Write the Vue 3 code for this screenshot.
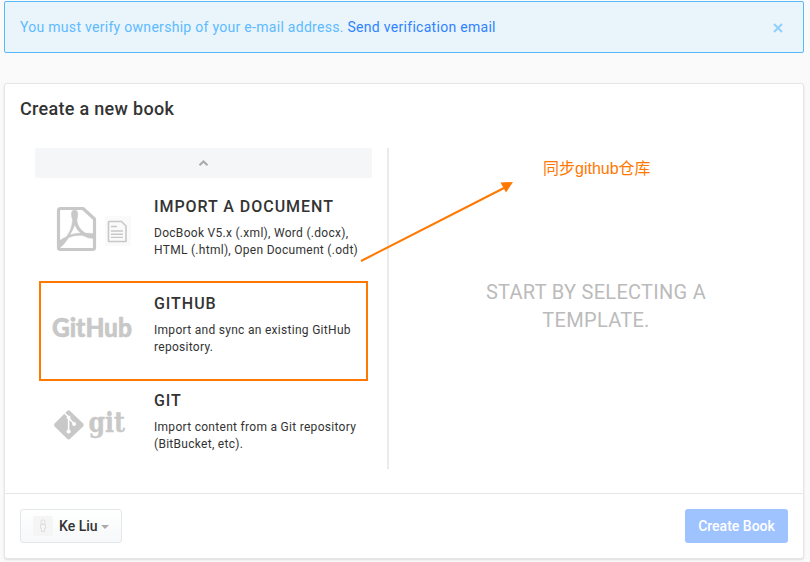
<script setup>
const templates = [
  { id: 'document', title: 'IMPORT A DOCUMENT', lines: ['DocBook V5.x (.xml), Word (.docx),', 'HTML (.html), Open Document (.odt)'] },
  { id: 'github', title: 'GITHUB', lines: ['Import and sync an existing GitHub', 'repository.'] },
  { id: 'git', title: 'GIT', lines: ['Import content from a Git repository', '(BitBucket, etc).'] },
]
</script>

<template>
  <main class="page">
    <div class="alert">
      <p>You must verify ownership of your e-mail address. <a>Send verification email</a></p>
      <svg class="close" width="10" height="10" viewBox="0 0 10 10"><path d="M1 1L9 9M9 1L1 9" /></svg>
    </div>

    <section class="card">
      <h1>Create a new book</h1>
      <div class="body">
        <div class="picker">
          <button class="scroll-up">
            <svg width="10" height="6" viewBox="0 0 10 6"><path d="M.5 5.2L4.5 1.4L8.5 5.2" /></svg>
          </button>
          <div v-for="item in templates" :key="item.id" class="item">
            <div class="logo">
              <svg v-if="item.id === 'document'" width="92" height="60" viewBox="0 0 92 60">
                <rect x="59" y="16" width="26" height="30" fill="#fafafa" />
                <g fill="none" stroke="#c8c8c8" stroke-linejoin="round">
                  <path d="M14.500 8.500H37L48.500 19V47.500Q48.500 49.500 46.500 49.500H14.500Q12.500 49.500 12.500 47.500V10.500Q12.500 8.500 14.500 8.500Z" stroke-width="3.200" />
                  <path d="M63 21.500H75.500L80 26V41.500H62.500V22.500Q62.500 21.500 63 21.500Z" stroke-width="1.600" />
                  <path d="M65 26.500H71M65 31H77M65 34.200H77M65 37.400H77" stroke-width="1.400" />
                </g>
                <path fill="#c8c8c8" stroke="#c8c8c8" stroke-width=".3" fill-rule="evenodd" d="M28.500 10C32.400 10 32.500 14 31 20C31.500 25.500 34.500 30 39.500 33Q44 33 48 33.500V38.500C43 38.800 40 37 36.500 35.500Q28 35 22.500 37.700C20 42 16 47 12 49V41.500Q15.500 39 20.500 36.500Q26 29 26.500 20C24.500 14 25 10 28.500 10ZM28.800 25Q26.500 31 24 34.800Q29 33 34.500 33Q31 30.500 28.800 25Z" />
              </svg>
              <svg v-else-if="item.id === 'github'" width="92" height="60" viewBox="0 0 92 60">
                <text class="github-mark" x="6" y="40" textLength="80" lengthAdjust="spacingAndGlyphs">GitHub</text>
              </svg>
              <svg v-else width="92" height="60" viewBox="0 0 92 60">
                <g transform="translate(-.9 3)">
                  <path fill="#c8c8c8" d="M22 14Q23.500 12.600 25 14L38 26.500Q39.300 28 38 29.500L25 41.800Q23.500 43.200 22 41.800L9.500 29.500Q8.100 28 9.500 26.500Z" />
                  <path d="M19 15.500L23.500 20.200V34M23.500 21L29 26.800" fill="none" stroke="#fff" stroke-width="1.500" />
                  <circle cx="23.500" cy="20.500" r="1.900" fill="#fff" /><circle cx="23.500" cy="34.500" r="2.100" fill="#fff" /><circle cx="29" cy="27" r="2" fill="#fff" />
                </g>
                <text class="git-mark" x="42.500" y="37.500" textLength="36.500" lengthAdjust="spacingAndGlyphs">git</text>
              </svg>
            </div>
            <div class="copy">
              <h2>{{ item.title }}</h2>
              <p><span v-for="line in item.lines" :key="line">{{ line }}</span></p>
            </div>
          </div>
        </div>
        <div class="preview"><p>START BY SELECTING A<br>TEMPLATE.</p></div>
      </div>
      <footer>
        <button class="owner">
          <svg class="avatar" width="20" height="20" viewBox="0 0 20 20">
            <rect width="20" height="20" rx="2" fill="#f5f5f5" />
            <g fill="none" stroke="#dedede"><rect x="8" y="4" width="4" height="4" rx="1.500" /><path d="M7.500 8.500H12.500V12.500H11.500V15.500H8.500V12.500H7.500Z" /></g>
          </svg>
          <span>Ke Liu</span>
          <i class="caret"></i>
        </button>
        <button class="create">Create Book</button>
      </footer>
    </section>

    <div class="highlight"></div>
    <svg class="arrow" width="160" height="90" viewBox="0 0 160 90">
      <path d="M6 84L149 11" stroke="#ff7800" stroke-width="2" />
      <path d="M158 5L145.500 5.500L151 15.500Z" fill="#ff7800" />
    </svg>
    <div class="note">同步github仓库</div>
  </main>
</template>

<style>
body { margin: 0; background: #fafafa; }
</style>

<style scoped>
* { box-sizing: border-box; }
h1, h2, p { margin: 0; }
button { font: inherit; padding: 0; border: 0; }
.page { position: relative; width: 810px; height: 562px; padding: 1px 6px 0 4px; overflow: hidden; background: #fafafa; color: #333; font-family: Roboto, sans-serif; }
.alert { height: 52px; border: 1px solid #56b9fa; border-radius: 2px; background: #e9f4fb; display: flex; align-items: center; justify-content: space-between; padding: 0 20px 0 15px; color: #5dbbff; font-size: 14px; letter-spacing: .29px; }
.alert a { color: #2f83ff; }
.close { stroke: #92d0fc; stroke-width: 2; fill: none; margin-top: 1px; }
.card { margin-top: 30px; height: 476px; border: 1px solid #e6e6e8; border-radius: 3px; background: #fff; box-shadow: 0 1px 2px rgba(0, 0, 0, .12); display: flex; flex-direction: column; }
h1 { padding: 13px 15px 0; font-size: 18px; line-height: 24px; font-weight: 500; letter-spacing: .3px; }
.body { display: flex; padding: 27px 30px 0; height: 372px; }
.picker { width: 337px; }
.scroll-up { display: flex; width: 337px; height: 30px; align-items: center; justify-content: center; background: #f5f6f8; border-radius: 2px; }
.scroll-up svg { fill: none; stroke: #aaa; stroke-width: 2; }
.item { display: flex; height: 97px; padding: 19px 0 0 11px; }
.logo { width: 108px; padding-top: 3px; }
.logo svg { display: block; overflow: visible; }
.github-mark { font: 900 26px Lato, sans-serif; fill: #c8c8c8; stroke: #c8c8c8; stroke-width: .6px; }
.git-mark { font: bold 27px "DejaVu Serif", serif; fill: #c8c8c8; stroke: #c8c8c8; stroke-width: .3px; }
h2 { font-size: 16px; line-height: 20px; font-weight: 500; letter-spacing: .96px; white-space: nowrap; }
.copy p { margin-top: 8px; font-size: 12px; line-height: 17px; letter-spacing: .29px; white-space: nowrap; }
.copy span { display: block; }
.preview { width: 416px; height: 321px; margin-left: 15px; border-left: 2px solid #ebebeb; flex: none; display: flex; align-items: center; justify-content: center; color: #bbb; font-size: 20px; line-height: 28px; letter-spacing: .29px; text-align: center; padding-bottom: 5px; }
footer { border-top: 1px solid #e6e6e6; flex: 1; display: flex; align-items: flex-start; justify-content: space-between; padding: 15px; font-size: 14px; font-weight: 500; }
.owner { width: 102px; height: 34px; border: 1px solid #e4e7ea; border-radius: 3px; background: linear-gradient(#fff, #f6f8f9); display: flex; align-items: center; padding-left: 12px; color: #333; }
.owner span { margin-left: 6px; }
.caret { margin: 2px 0 0 3px; border: 4px solid transparent; border-top-color: #aaa; border-bottom: 0; }
.create { width: 103px; height: 34px; border-radius: 3px; background: #9ec3ff; color: #fff; }
.highlight { position: absolute; left: 39px; top: 281px; width: 329px; height: 100px; border: 2px solid #ff7800; }
.arrow { position: absolute; left: 355px; top: 177px; }
.note { position: absolute; left: 543px; top: 158px; color: #ff7800; font: 16px/22px "Liberation Sans", "Noto Sans CJK SC", sans-serif; white-space: nowrap; }
</style>
